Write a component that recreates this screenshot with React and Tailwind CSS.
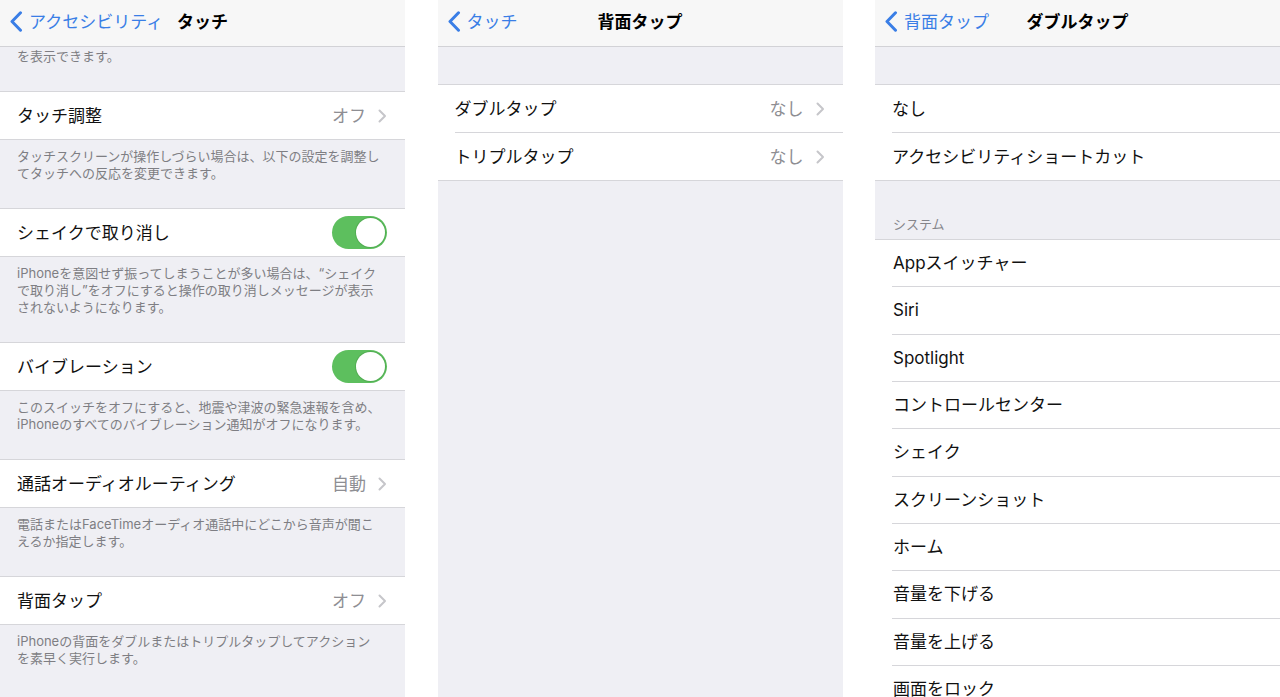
import React from 'react';

const font = "font-['Inter','Noto_Sans_CJK_JP',sans-serif]";

function BackChevron() {
  return (
    <svg width="14" height="21" viewBox="0 0 14 21" className="shrink-0">
      <path
        d="M11.5 1.8 L3 10.5 L11.5 19.2"
        stroke="#3a7ee6"
        strokeWidth="3"
        fill="none"
        strokeLinecap="round"
        strokeLinejoin="round"
      />
    </svg>
  );
}

function RowChevron() {
  return (
    <svg width="9" height="14" viewBox="0 0 9 14" className="shrink-0">
      <path
        d="M1.5 1.5 L7 7 L1.5 12.5"
        stroke="#c6c6ca"
        strokeWidth="2"
        fill="none"
        strokeLinecap="round"
        strokeLinejoin="round"
      />
    </svg>
  );
}

function Toggle() {
  return (
    <div className="w-[55px] h-[33px] rounded-full bg-[#5dbf5e] p-[2px] flex justify-end">
      <div className="w-[29px] h-[29px] rounded-full bg-white shadow-[0_0_0_1px_rgba(60,140,60,0.35)]" />
    </div>
  );
}

function NavBar({ back, title }) {
  return (
    <div className="shrink-0 h-[47px] bg-[#f7f7f7] border-b border-[#d2d2d6] grid grid-cols-[1fr_auto_1fr] items-center pb-[3px]">
      <div className="flex items-center gap-[6px] pl-[9px] text-[17px] leading-[20px] text-[#3a7ee6]">
        <BackChevron />
        <span>{back}</span>
      </div>
      <div className="text-[17px] leading-[20px] font-bold text-black">{title}</div>
      <div />
    </div>
  );
}

function Cell({ label, value, toggle, chevron }) {
  return (
    <div className="h-[47px] flex items-center justify-between pl-[17px] pr-[18px] bg-white">
      <span className="text-[17px] leading-[20px] text-[#111]">{label}</span>
      {toggle ? (
        <Toggle />
      ) : chevron ? (
        <div className="flex items-center gap-[12px]">
          {value && <span className="text-[17px] leading-[20px] text-[#8e8e93]">{value}</span>}
          <RowChevron />
        </div>
      ) : null}
    </div>
  );
}

function Footer({ lines, top = 'pt-[8px]' }) {
  return (
    <div className={`shrink-0 ${top} pb-[26px] px-[17px] text-[13px] leading-[17px] text-[#7e7e83]`}>
      {lines.map((l, i) => (
        <div key={i} className="whitespace-nowrap">{l}</div>
      ))}
    </div>
  );
}

function Group({ children }) {
  return <div className="shrink-0 border-y border-[#d6d6da] bg-white">{children}</div>;
}

function TouchPanel() {
  return (
    <div className="w-[405px] h-full bg-[#efeff4] overflow-hidden flex flex-col">
      <NavBar back="アクセシビリティ" title="タッチ" />
      <Footer top="pt-[1px]" lines={['を表示できます。']} />
      <Group>
        <Cell label="タッチ調整" value="オフ" chevron />
      </Group>
      <Footer
        lines={[
          'タッチスクリーンが操作しづらい場合は、以下の設定を調整し',
          'てタッチへの反応を変更できます。',
        ]}
      />
      <Group>
        <Cell label="シェイクで取り消し" toggle />
      </Group>
      <Footer
        lines={[
          'iPhoneを意図せず振ってしまうことが多い場合は、“シェイク',
          'で取り消し”をオフにすると操作の取り消しメッセージが表示',
          'されないようになります。',
        ]}
      />
      <Group>
        <Cell label="バイブレーション" toggle />
      </Group>
      <Footer
        lines={[
          'このスイッチをオフにすると、地震や津波の緊急速報を含め、',
          'iPhoneのすべてのバイブレーション通知がオフになります。',
        ]}
      />
      <Group>
        <Cell label="通話オーディオルーティング" value="自動" chevron />
      </Group>
      <Footer
        lines={[
          '電話またはFaceTimeオーディオ通話中にどこから音声が聞こ',
          'えるか指定します。',
        ]}
      />
      <Group>
        <Cell label="背面タップ" value="オフ" chevron />
      </Group>
      <Footer
        lines={[
          'iPhoneの背面をダブルまたはトリプルタップしてアクション',
          'を素早く実行します。',
        ]}
      />
    </div>
  );
}

function BackTapPanel() {
  return (
    <div className="w-[405px] h-full bg-[#efeff4] overflow-hidden flex flex-col">
      <NavBar back="タッチ" title="背面タップ" />
      <div className="shrink-0 h-[37px]" />
      <Group>
        <Cell label="ダブルタップ" value="なし" chevron />
        <div className="ml-[17px] border-t border-[#d6d6da]" />
        <Cell label="トリプルタップ" value="なし" chevron />
      </Group>
    </div>
  );
}

function DoubleTapPanel() {
  const system = [
    'Appスイッチャー',
    'Siri',
    'Spotlight',
    'コントロールセンター',
    'シェイク',
    'スクリーンショット',
    'ホーム',
    '音量を下げる',
    '音量を上げる',
    '画面をロック',
  ];

  return (
    <div className="w-[405px] h-full bg-[#efeff4] overflow-hidden flex flex-col">
      <NavBar back="背面タップ" title="ダブルタップ" />
      <div className="shrink-0 h-[37px]" />
      <Group>
        <Cell label="なし" />
        <div className="ml-[17px] border-t border-[#d6d6da]" />
        <Cell label="アクセシビリティショートカット" />
      </Group>
      <div className="shrink-0 h-[58px] flex items-end px-[18px] pb-[6px] text-[13px] leading-[17px] text-[#85858a]">
        システム
      </div>
      <div className="shrink-0 border-t border-[#d6d6da] bg-white">
        {system.map((s, i) => (
          <div key={s}>
            {i > 0 && <div className="ml-[17px] border-t border-[#d6d6da]" />}
            <div className="h-[46.33px] flex items-center pl-[18px] text-[17px] leading-[20px] text-[#111]">
              {s}
            </div>
          </div>
        ))}
      </div>
    </div>
  );
}

export default function App() {
  return (
    <div className={`w-[1280px] h-[697px] bg-white flex justify-between overflow-hidden ${font}`}>
      <TouchPanel />
      <BackTapPanel />
      <DoubleTapPanel />
    </div>
  );
}
